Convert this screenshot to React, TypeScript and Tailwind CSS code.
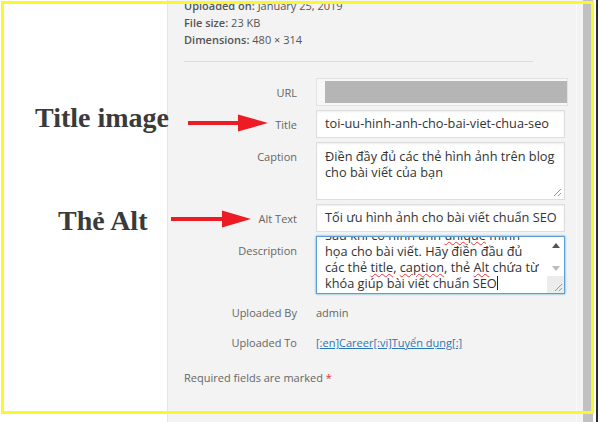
import React from "react";

const Label = ({ children }: { children: React.ReactNode }) => (
  <div className="w-[113px] shrink-0 text-right pt-[6px] leading-[17px] text-[11px] text-[#666]">{children}</div>
);

const Wavy = ({ children }: { children: React.ReactNode }) => (
  <span className="underline decoration-wavy decoration-[#e33] decoration-[1px] underline-offset-[1px]">{children}</span>
);

const Grip = () => (
  <svg width="10" height="10" viewBox="0 0 10 10" className="block">
    <line x1="9" y1="2" x2="2" y2="9" stroke="#999" strokeWidth="1" />
    <line x1="9" y1="6" x2="6" y2="9" stroke="#999" strokeWidth="1" />
  </svg>
);

export default function App() {
  return (
    <div className="relative w-[600px] h-[422px] overflow-hidden bg-white flex font-['Open_Sans',sans-serif]">
      <div className="w-[167px] shrink-0 bg-white" />
      <div className="w-[416px] shrink-0 bg-[#f3f3f3] border-l border-[#e4e4e4] flex">
        <div className="flex-1 pl-[16px]">
          <div className="-mt-[3px] text-[11px] leading-[17px] text-[#555]">
            <div><span className="font-semibold">Uploaded on:</span> January 25, 2019</div>
            <div><span className="font-semibold">File size:</span> 23 KB</div>
            <div><span className="font-semibold">Dimensions:</span> 480 × 314</div>
          </div>
          <div className="mt-[13px] h-px w-[349px] bg-[#dcdcdc]" />

          <div className="mt-[16px] flex">
            <Label>URL</Label>
            <div className="ml-[19px] w-[252px] h-[28px] border border-[#e2e2e2] bg-[#f7f7f7] pl-[8px] py-[2px]">
              <div className="h-full bg-[#b5b5b5]" />
            </div>
          </div>

          <div className="mt-[4px] flex">
            <Label>Title</Label>
            <div className="ml-[19px] w-[249px] h-[28px] border border-[#dddddd] bg-white flex items-center px-[8px] text-[12.75px] text-[#333] whitespace-nowrap shadow-[inset_0_1px_2px_rgba(0,0,0,0.07)]">
              toi-uu-hinh-anh-cho-bai-viet-chua-seo
            </div>
          </div>

          <div className="mt-[4px] flex">
            <Label>Caption</Label>
            <div className="ml-[19px] w-[249px] h-[58px] border border-[#dddddd] bg-white flex flex-col text-[12.75px] leading-[16px] text-[#333] shadow-[inset_0_1px_2px_rgba(0,0,0,0.07)]">
              <div className="flex-1 pt-[5px] px-[8px] whitespace-nowrap">
                <div>Điền đầy đủ các thẻ hình ảnh trên blog</div>
                <div>cho bài viết của bạn</div>
              </div>
              <div className="flex justify-end pr-[2px] pb-[2px]"><Grip /></div>
            </div>
          </div>

          <div className="mt-[4px] flex">
            <Label>Alt Text</Label>
            <div className="ml-[19px] w-[249px] h-[28px] border border-[#dddddd] bg-white flex items-center px-[8px] text-[12.75px] text-[#333] whitespace-nowrap shadow-[inset_0_1px_2px_rgba(0,0,0,0.07)]">
              Tối ưu hình ảnh cho bài viết chuẩn SEO
            </div>
          </div>

          <div className="mt-[4px] flex">
            <Label>Description</Label>
            <div className="ml-[19px] w-[249px] h-[58px] border border-[#5b9dd9] bg-white flex overflow-hidden shadow-[0_0_2px_rgba(30,140,190,0.8)]">
              <div className="flex-1 overflow-hidden px-[8px]">
                <div className="-mt-[10px] text-[12.75px] leading-[16px] text-[#333] whitespace-nowrap">
                  <div>Sau khi có hình ảnh <Wavy>unique</Wavy> minh</div>
                  <div>họa cho bài viết. Hãy điền đầu đủ</div>
                  <div>các thẻ <Wavy>title</Wavy>, <Wavy>caption</Wavy>, thẻ <Wavy>Alt</Wavy> chứa từ</div>
                  <div className="flex items-center">khóa giúp bài viết chuẩn SEO<span className="inline-block w-px h-[14px] bg-[#222]" /></div>
                </div>
              </div>
              <div className="w-[17px] shrink-0 flex flex-col">
                <div className="h-[17px] flex items-center justify-center">
                  <svg width="8" height="5" viewBox="0 0 8 5"><polygon points="0,5 4,0 8,5" fill="#555" /></svg>
                </div>
                <div className="h-[6px]" />
                <div className="h-[16px] flex items-center justify-center">
                  <svg width="8" height="5" viewBox="0 0 8 5"><polygon points="0,0 8,0 4,5" fill="#bbb" /></svg>
                </div>
                <div className="flex-1 bg-[#ececec] flex items-end justify-end pr-[1px] pb-[1px]"><Grip /></div>
              </div>
            </div>
          </div>

          <div className="mt-[10px] flex text-[11px] leading-[17px]">
            <div className="w-[113px] shrink-0 text-right text-[#666]">Uploaded By</div>
            <div className="ml-[19px] text-[#666]">admin</div>
          </div>

          <div className="mt-[13px] flex text-[11px] leading-[17px]">
            <div className="w-[113px] shrink-0 text-right text-[#666]">Uploaded To</div>
            <div className="ml-[19px] text-[#2a77b3] underline">[:en]Career[:vi]Tuyển dụng[:]</div>
          </div>

          <div className="mt-[18px] text-[11px] leading-[17px] text-[#666]">
            Required fields are marked <span className="text-[#dc3232]">*</span>
          </div>
        </div>
        <div className="w-px bg-[#f9f9f9]" />
        <div className="w-[6px]" />
      </div>
      <div className="w-[10px] shrink-0 bg-[#c1c1c1]" />
      <div className="w-[3px] shrink-0 bg-white" />
      <div className="w-[2px] shrink-0 bg-[#2a2a2a]" />
      <div className="flex-1 bg-white" />

      {/* annotation overlay */}
      <div className="absolute left-[35px] top-[104px] text-[28px] leading-[28px] font-bold text-[#3a3a3a] font-['Liberation_Serif',serif] whitespace-nowrap">
        Title image
      </div>
      <div className="absolute left-[58px] top-[207px] text-[28px] leading-[28px] font-bold text-[#3a3a3a] font-['Liberation_Serif',serif] whitespace-nowrap">
        Thẻ Alt
      </div>
      <svg className="absolute left-0 top-0" width="600" height="422" viewBox="0 0 600 422">
        <rect x="188" y="121" width="52" height="4" fill="#ec1c24" />
        <polygon points="238,114.5 268,123 238,131.5" fill="#ec1c24" />
        <rect x="171" y="217" width="53" height="4" fill="#ec1c24" />
        <polygon points="222,210.5 251,219 222,227.5" fill="#ec1c24" />
      </svg>

      {/* yellow frame */}
      <div className="absolute left-[1px] top-[1px] w-[593px] h-[413px] border-[3px] border-[#f8f82a]" />
    </div>
  );
}
